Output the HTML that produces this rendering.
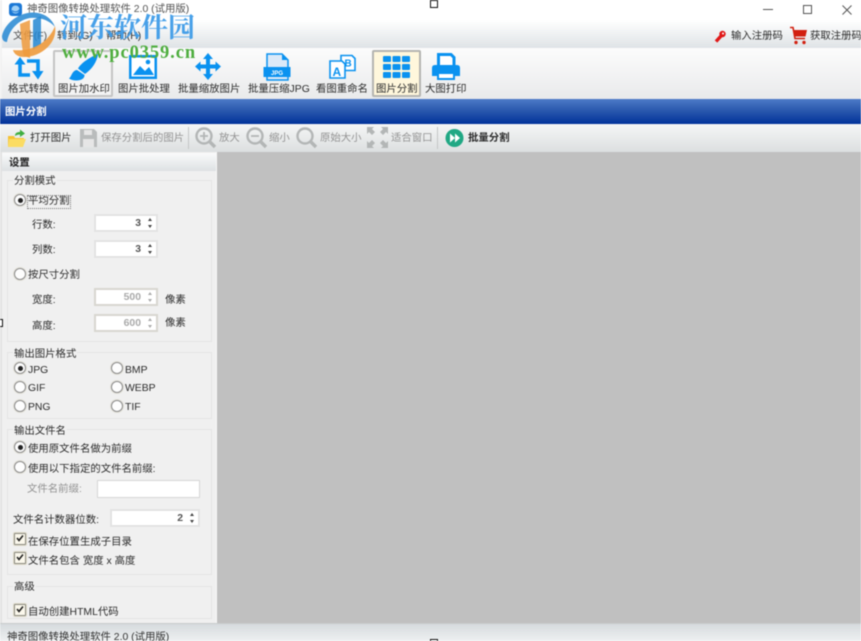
<!DOCTYPE html>
<html><head><meta charset="utf-8">
<style>
html,body{margin:0;padding:0;width:861px;height:641px;overflow:hidden;background:#fff}
#p{position:relative;width:861px;height:641px;overflow:hidden;filter:blur(0.4px);font-family:"Liberation Sans","Noto Sans CJK SC",sans-serif;font-size:10.4px;color:#2c2c2c}
.a{position:absolute}
.t{position:absolute;white-space:nowrap;line-height:12px;font-size:10.4px;color:#2c2c2c;margin-top:4px}
.g{color:#939393}
.gb{position:absolute;border:1px solid #e4e4e4}
.s{position:absolute;background:#fff;border:2px solid #e3e3e3;box-sizing:border-box;height:18px;font-size:10.4px;line-height:16px;text-align:right;color:#555;padding-right:15px;font-weight:bold}
.s.d{border-color:#d8d6d0;color:#aaa}
.s i{position:absolute;right:3px;top:2px;width:5px;height:10px;font-style:normal}
.s i:before{content:"";position:absolute;left:0;top:0;border:2.5px solid transparent;border-top:0;border-bottom:3px solid #444}
.s i:after{content:"";position:absolute;left:0;bottom:0;border:2.5px solid transparent;border-bottom:0;border-top:3px solid #444}
.s.d i:before{border-bottom-color:#aaa}.s.d i:after{border-top-color:#aaa}
.r{position:absolute;width:10px;height:10px;border:1px solid #8c8c8c;border-radius:50%;background:#fdfdfd;box-shadow:0 0 0 1px #e4e2da}
.r.on:after{content:"";position:absolute;left:3px;top:3px;width:5px;height:5px;border-radius:50%;background:#222}
.k{position:absolute;width:10px;height:10px;border:1px solid #8a8a80;background:#fbf8ec;box-shadow:0 0 0 1px #e0dccb;border-radius:1px}
svg{position:absolute;overflow:visible}
</style></head><body><div id="p">

<!-- title/menu backgrounds -->
<div class="a" style="left:0;top:0;width:861px;height:24px;background:#fff"></div>
<div class="a" style="left:0;top:20px;width:861px;height:28px;background:linear-gradient(#fff,#dfe3e6)"></div>
<div class="a" style="left:0;top:48px;width:861px;height:51px;background:linear-gradient(#fcfcfc,#e9eaeb)"></div>
<div class="a" style="left:0;top:0;width:2px;height:150px;background:#f2f2f2"></div>

<!-- app icon + title -->
<svg style="left:9px;top:3px" width="13" height="13"><rect width="13" height="13" rx="3" fill="#1b78d6"/><circle cx="6.500" cy="6.500" r="4" fill="#9fd0f5"/><path d="M3 7.500C5 9.500 9 9.500 10.500 6.500" stroke="#1b78d6" fill="none"/></svg>
<div class="t" style="left:27px;top:0;color:#555">神奇图像转换处理软件 2.0 (试用版)</div>

<!-- window buttons -->
<div class="a" style="left:763px;top:9px;width:10px;height:1px;background:#555"></div>
<div class="a" style="left:803px;top:5px;width:7px;height:7px;border:1.500px solid #555"></div>
<svg style="left:842px;top:5px" width="10" height="10"><path d="M0.500 0.500L9.500 9.500M9.500 0.500L0.500 9.500" stroke="#555" fill="none"/></svg>

<!-- menu -->
<div class="t" style="left:13px;top:27px;color:#555">文件(F)</div>
<div class="t" style="left:57px;top:27px">转到(G)</div>
<div class="t" style="left:106px;top:27px">帮助(H)</div>

<!-- right links -->
<svg style="left:714px;top:29px" width="14" height="15"><circle cx="8.500" cy="5" r="3.200" fill="#e01818"/><circle cx="9" cy="4.500" r="1" fill="#fff"/><path d="M7 7L2 12.500" stroke="#e01818" stroke-width="3.400"/></svg>
<div class="t" style="left:731px;top:27px">输入注册码</div>
<svg style="left:789px;top:26px" width="20" height="20"><path d="M1 1.500H4L6 12.500H16" stroke="#d22010" stroke-width="1.600" fill="none"/><path d="M4.500 4H18L16.500 10.500H5.500Z" fill="#d22010"/><circle cx="7" cy="16.500" r="1.700" fill="#d22010"/><circle cx="15" cy="16.500" r="1.700" fill="#d22010"/></svg>
<div class="t" style="left:810px;top:27px">获取注册码</div>

<!-- toolbar selected borders -->
<div class="a" style="left:53px;top:50px;width:60px;height:47px;box-sizing:border-box;border:2px solid #c4c4c4;border-radius:2px;background:#f4f4f4"></div>
<div class="a" style="left:372px;top:50px;width:49px;height:47px;box-sizing:border-box;border:2px solid #b4b4b0;border-radius:2px;background:#fff7dc"></div>

<!-- toolbar icons -->
<svg style="left:14px;top:55px" width="30" height="26"><g fill="none" stroke="#0a92f0" stroke-width="3.600"><path d="M6 8V20H16"/><path d="M24 18V6H13"/></g><path d="M0.500 9.500L6 2L11.500 9.500Z" fill="#0a92f0"/><path d="M18 16H29.500L24 24.500Z" fill="#0a92f0"/></svg>
<svg style="left:68px;top:53px" width="32" height="30"><path d="M30 1C22 4 13 10 10 15.500L17 21C24 16 29 9 30 1Z" fill="#0a92f0"/><path d="M9 17C4 17.500 4 23 1 25.500C6 29 17 28 16.500 22Z" fill="#0a92f0"/></svg>
<svg style="left:129px;top:55px" width="28" height="24"><rect x="1.250" y="1.250" width="25.500" height="21.500" fill="#fff" stroke="#0a92f0" stroke-width="2.500"/><path d="M4 20L11 11L16 16L20 12L25 20Z" fill="#0a92f0"/><circle cx="19" cy="7" r="2.300" fill="#0a92f0"/></svg>
<svg style="left:194px;top:52px" width="28" height="29"><path d="M14 1L19 7H16V12.500H21.500V9.500L27 14.500L21.500 19.500V16.500H16V22H19L14 28L9 22H12V16.500H6.500V19.500L1 14.500L6.500 9.500V12.500H12V7H9Z" fill="#0a92f0"/></svg>
<svg style="left:263px;top:53px" width="28" height="28"><path d="M4 1H19L25 7V27H4Z" fill="#dbe9f8" stroke="#0a92f0" stroke-width="1.500"/><path d="M19 1V7H25Z" fill="#0a92f0"/><rect x="0.500" y="14" width="27" height="10" fill="#0a92f0"/><text x="14" y="22" font-size="6" fill="#fff" text-anchor="middle" font-family="Liberation Sans" font-weight="bold">JPG</text></svg>
<svg style="left:329px;top:54px" width="28" height="26" fill="none" stroke="#0a92f0" stroke-width="1.600"><path d="M12 1.500H23L26 4.500V16.500H12Z" fill="#fff"/><path d="M1 7H13L16 10V24H1Z" fill="#fff"/><text x="15.500" y="12.500" font-size="10" stroke="none" fill="#0a92f0" font-family="Liberation Sans" font-weight="bold">B</text><text x="3.500" y="22" font-size="12" stroke="none" fill="#0a92f0" font-family="Liberation Sans" font-weight="bold">A</text></svg>
<svg style="left:383px;top:56px" width="27" height="22" fill="#0a92f0"><rect x="0" y="0" width="8" height="6" rx="1"/><rect x="9.500" y="0" width="8" height="6" rx="1"/><rect x="19" y="0" width="8" height="6" rx="1"/><rect x="0" y="8" width="8" height="6" rx="1"/><rect x="9.500" y="8" width="8" height="6" rx="1"/><rect x="19" y="8" width="8" height="6" rx="1"/><rect x="0" y="16" width="8" height="6" rx="1"/><rect x="9.500" y="16" width="8" height="6" rx="1"/><rect x="19" y="16" width="8" height="6" rx="1"/></svg>
<svg style="left:432px;top:53px" width="28" height="27"><path d="M6.500 13V1.500H19L22 4.500V13" fill="#fff" stroke="#0a92f0" stroke-width="3"/><path d="M3 12H25Q28 12 28 15V23H23V19H5V23H0V15Q0 12 3 12Z" fill="#0a92f0"/><rect x="6" y="20" width="16" height="6" fill="#fff" stroke="#0a92f0" stroke-width="2"/></svg>

<!-- toolbar labels -->
<div class="t" style="left:8px;top:80px">格式转换</div>
<div class="t" style="left:58px;top:80px">图片加水印</div>
<div class="t" style="left:118px;top:80px">图片批处理</div>
<div class="t" style="left:178px;top:80px">批量缩放图片</div>
<div class="t" style="left:248px;top:80px">批量压缩JPG</div>
<div class="t" style="left:316px;top:80px">看图重命名</div>
<div class="t" style="left:376px;top:80px">图片分割</div>
<div class="t" style="left:425px;top:80px">大图打印</div>

<!-- blue header -->
<div class="a" style="left:0;top:99px;width:861px;height:25px;background:linear-gradient(#4d7bc8,#2f5db0 40%,#01329a)"></div>
<div class="t" style="left:5px;top:103px;color:#fff;font-weight:bold">图片分割</div>

<!-- action bar -->
<div class="a" style="left:0;top:124px;width:861px;height:28px;background:linear-gradient(#f5f6f6,#dcdfe0)"></div>
<svg style="left:7px;top:128px" width="20" height="20"><path d="M1 8H7L8 10H17L15 19H1Z" fill="#f5c233"/><path d="M2 11H19L16 19H1Z" fill="#fbdc63"/><path d="M8 8C8 5 10 4 13 4V1.500L18 5.500L13 9V6.500C11 6.500 9.500 7 8 8Z" fill="#3fae3f"/></svg>
<div class="t" style="left:30px;top:129px">打开图片</div>
<svg style="left:80px;top:129px" width="17" height="18"><path d="M0 0H14L17 3V18H0Z" fill="#b9bcbc"/><rect x="4" y="1" width="8" height="5" fill="#e6e6e6"/><rect x="3" y="10" width="11" height="8" fill="#e6e6e6"/></svg>
<div class="t g" style="left:101px;top:129px">保存分割后的图片</div>
<div class="a" style="left:188px;top:127px;width:1px;height:22px;background:#c4c6c6"></div>
<svg style="left:195px;top:127px" width="22" height="22" fill="none" stroke="#b3b6b6" stroke-width="2.400"><circle cx="9" cy="9" r="7.500"/><path d="M15 15L20 20" stroke-width="3.400"/><path d="M5 9H13M9 5V13" stroke-width="1.800"/></svg>
<div class="t g" style="left:219px;top:129px">放大</div>
<svg style="left:246px;top:127px" width="22" height="22" fill="none" stroke="#b3b6b6" stroke-width="2.400"><circle cx="9" cy="9" r="7.500"/><path d="M15 15L20 20" stroke-width="3.400"/><path d="M5 9H13" stroke-width="1.800"/></svg>
<div class="t g" style="left:269px;top:129px">缩小</div>
<svg style="left:296px;top:127px" width="22" height="22" fill="none" stroke="#b3b6b6" stroke-width="2.400"><circle cx="9" cy="9" r="7.500"/><path d="M15 15L20 20" stroke-width="3.400"/></svg>
<div class="t g" style="left:320px;top:129px">原始大小</div>
<svg style="left:367px;top:127px" width="22" height="22" fill="#b3b6b6"><path d="M0 0H7L5 2L8 5L5 8L2 5L0 7Z"/><path d="M21 0H14L16 2L13 5L16 8L19 5L21 7Z"/><path d="M0 21H7L5 19L8 16L5 13L2 16L0 14Z"/><path d="M21 21H14L16 19L13 16L16 13L19 16L21 14Z"/></svg>
<div class="t g" style="left:391px;top:129px">适合窗口</div>
<div class="a" style="left:437px;top:127px;width:1px;height:22px;background:#c4c6c6"></div>
<svg style="left:445px;top:129px" width="19" height="18"><circle cx="9.500" cy="9" r="9" fill="#20a884"/><path d="M5 4.500L10 9L5 13.500ZM10 4.500L15 9L10 13.500Z" fill="#fff"/></svg>
<div class="t" style="left:468px;top:129px;font-weight:bold">批量分割</div>

<!-- main gray -->
<div class="a" style="left:216px;top:152px;width:645px;height:471px;background:#c0c0c0"></div>
<div class="a" style="left:0;top:152px;width:217px;height:471px;background:#f0f0f0;border-left:2px solid #e2e2e2;border-right:1px solid #f8f8f8;box-sizing:border-box"></div>
<div class="a" style="left:2px;top:153px;width:214px;height:18px;background:linear-gradient(#fafbfb,#dde1e3)"></div>
<div class="t" style="left:9px;top:154px;font-weight:bold;color:#222">设置</div>

<!-- group 1 -->
<div class="gb" style="left:7px;top:180px;width:203px;height:160px"></div>
<div class="t" style="left:13px;top:172px;background:#f0f0f0;padding:0 1px">分割模式</div>
<div class="r on" style="left:14px;top:194px"></div>
<div class="t" style="left:28px;top:192px;outline:1px dotted #777;outline-offset:0">平均分割</div>
<div class="t" style="left:32px;top:216px">行数:</div>
<div class="s" style="left:94px;top:214px;width:64px">3<i></i></div>
<div class="t" style="left:32px;top:241px">列数:</div>
<div class="s" style="left:94px;top:240px;width:64px">3<i></i></div>
<div class="r" style="left:14px;top:268px"></div>
<div class="t" style="left:28px;top:266px">按尺寸分割</div>
<div class="t" style="left:32px;top:291px">宽度:</div>
<div class="s d" style="left:94px;top:288px;width:64px">500<i></i></div>
<div class="t" style="left:165px;top:291px">像素</div>
<div class="t" style="left:32px;top:317px">高度:</div>
<div class="s d" style="left:94px;top:314px;width:64px">600<i></i></div>
<div class="t" style="left:165px;top:314px">像素</div>

<!-- group 2 -->
<div class="gb" style="left:7px;top:352px;width:203px;height:65px"></div>
<div class="t" style="left:13px;top:345px;background:#f0f0f0;padding:0 1px">输出图片格式</div>
<div class="r on" style="left:14px;top:362px"></div><div class="t" style="left:28px;top:361px">JPG</div>
<div class="r" style="left:111px;top:362px"></div><div class="t" style="left:125px;top:361px">BMP</div>
<div class="r" style="left:14px;top:381px"></div><div class="t" style="left:28px;top:379px">GIF</div>
<div class="r" style="left:111px;top:381px"></div><div class="t" style="left:125px;top:379px">WEBP</div>
<div class="r" style="left:14px;top:400px"></div><div class="t" style="left:28px;top:398px">PNG</div>
<div class="r" style="left:111px;top:400px"></div><div class="t" style="left:125px;top:398px">TIF</div>

<!-- group 3 -->
<div class="gb" style="left:7px;top:429px;width:203px;height:144px"></div>
<div class="t" style="left:13px;top:422px;background:#f0f0f0;padding:0 1px">输出文件名</div>
<div class="r on" style="left:14px;top:441px"></div><div class="t" style="left:28px;top:440px">使用原文件名做为前缀</div>
<div class="r" style="left:14px;top:461px"></div><div class="t" style="left:28px;top:460px">使用以下指定的文件名前缀:</div>
<div class="t g" style="left:27px;top:480px">文件名前缀:</div>
<div class="a" style="left:97px;top:480px;width:103px;height:18px;box-sizing:border-box;background:#fff;border:1px solid #d6d6d6"></div>
<div class="t" style="left:13px;top:511px">文件名计数器位数:</div>
<div class="s" style="left:110px;top:509px;width:90px">2<i></i></div>
<div class="k" style="left:14px;top:533px"></div>
<div class="t" style="left:28px;top:533px">在保存位置生成子目录</div>
<div class="k" style="left:14px;top:552px"></div>
<div class="t" style="left:28px;top:552px">文件名包含 宽度 x 高度</div>

<!-- group 4 -->
<div class="gb" style="left:7px;top:586px;width:203px;height:31px"></div>
<div class="t" style="left:13px;top:578px;background:#f0f0f0;padding:0 1px">高级</div>
<div class="k" style="left:14px;top:604px"></div>
<div class="t" style="left:28px;top:603px">自动创建HTML代码</div>

<!-- checkmarks -->
<svg style="left:0;top:0" width="60" height="641" fill="none" stroke="#222" stroke-width="1.600"><path d="M17 538L19 540.500L23 535.500"/><path d="M17 557L19 559.500L23 554.500"/><path d="M17 609L19 611.500L23 606.500"/></svg>

<!-- status bar -->
<div class="a" style="left:0;top:623px;width:861px;height:18px;background:linear-gradient(#d6dbde,#eef0f1);border-top:1px solid #c8cccc;box-sizing:border-box"></div>
<div class="t" style="left:7px;top:628px;color:#333">神奇图像转换处理软件 2.0 (试用版)</div>

<!-- resize handles -->
<div class="a" style="left:430px;top:0;width:6px;height:6px;border:1px solid #111;background:#fff"></div>
<div class="a" style="left:-5px;top:319px;width:6px;height:6px;border:1px solid #111;background:#fff"></div>
<div class="a" style="left:430px;top:639px;width:6px;height:6px;border:1px solid #111;background:#fff"></div>

<!-- watermark logo -->
<svg style="left:0;top:0" width="60" height="62">
<path d="M20 24L30 20V58L24 56C22 50 21 36 20 24Z" fill="#ee9a3c" opacity=".85"/>
<path d="M33 20L41 16V44L33 50Z" fill="#2487d2" opacity=".85"/>
<path d="M2 36C5 22 22 10 38 13C46 14.500 52 19 55 27C49 20 40 17 30 18C18 20 9 30 7 42C4 42 2 40 2 36Z" fill="#2487d2" opacity=".85"/>
<path d="M13 50C30 52 48 44 55 26C58 42 42 57 24 57C18 57 14 54 13 50Z" fill="#ee9a3c" opacity=".9"/>
</svg>
<!-- watermark text -->
<div class="t" style="left:60px;top:5px;font-size:27px;line-height:34px;font-family:'Noto Serif CJK SC','Liberation Serif',serif;font-weight:700;color:#3f9ce8;opacity:.95">河东软件园</div>
<div class="t" style="left:62px;top:39px;font-size:18.500px;line-height:20px;font-family:'Liberation Serif',serif;font-weight:700;color:#4fae3f;letter-spacing:.9px">www.pc0359.cn</div>

</div></body></html>
